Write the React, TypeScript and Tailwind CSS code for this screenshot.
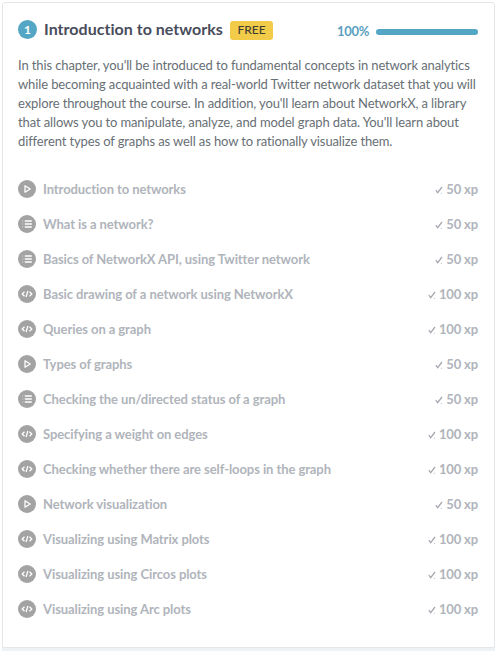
type Kind = "video" | "quiz" | "code";

interface Exercise {
  title: string;
  kind: Kind;
  xp: number;
}

const exercises: Exercise[] = [
  { title: "Introduction to networks", kind: "video", xp: 50 },
  { title: "What is a network?", kind: "quiz", xp: 50 },
  { title: "Basics of NetworkX API, using Twitter network", kind: "quiz", xp: 50 },
  { title: "Basic drawing of a network using NetworkX", kind: "code", xp: 100 },
  { title: "Queries on a graph", kind: "code", xp: 100 },
  { title: "Types of graphs", kind: "video", xp: 50 },
  { title: "Checking the un/directed status of a graph", kind: "quiz", xp: 50 },
  { title: "Specifying a weight on edges", kind: "code", xp: 100 },
  { title: "Checking whether there are self-loops in the graph", kind: "code", xp: 100 },
  { title: "Network visualization", kind: "video", xp: 50 },
  { title: "Visualizing using Matrix plots", kind: "code", xp: 100 },
  { title: "Visualizing using Circos plots", kind: "code", xp: 100 },
  { title: "Visualizing using Arc plots", kind: "code", xp: 100 },
];

function KindIcon({ kind }: { kind: Kind }) {
  return (
    <svg viewBox="0 0 18 18" className="size-[18px] shrink-0" fill="none" stroke="#fff">
      <circle cx="9" cy="9" r="9" fill="#a3a3a3" stroke="none" />
      {kind === "video" && <path d="M7 5.8v6.4L12.2 9z" strokeWidth="1.3" strokeLinejoin="round" />}
      {kind === "quiz" && (
        <>
          <path d="M4.2 6h1M4.2 9h1M4.2 12h1" strokeWidth="1" strokeOpacity=".6" />
          <path d="M6.8 6h7M6.8 9h7M6.8 12h7" strokeWidth="1.4" />
        </>
      )}
      {kind === "code" && (
        <path d="M6.5 6.7 4.2 9l2.3 2.3M11.5 6.7 13.8 9l-2.3 2.3M9.9 6 8.1 12" strokeWidth="1.3" />
      )}
    </svg>
  );
}

function Check() {
  return (
    <svg viewBox="0 0 8 8" className="mr-[3px] size-2" fill="none" stroke="#a5a9b0" strokeWidth="1.3">
      <path d="M.8 4.2 2.7 6.6 7 1" />
      <circle cx="6.3" cy="7.2" r=".5" fill="#a5a9b0" stroke="none" />
    </svg>
  );
}

export default function App() {
  return (
    <div className="h-[651px] w-[497px] bg-white font-['Lato',sans-serif] [font-variant-ligatures:none]">
      <div className="h-full pt-[2px] pl-[2px]">
        <section className="h-[646px] w-[493px] rounded-t-[3px] border border-[#e3e7ea] bg-white px-[15px] pt-[16px]">
          <header className="flex h-[22px] items-center">
            <span className="-mt-px flex size-[19px] items-center justify-center rounded-full bg-[#53a6c4] text-[12px] font-bold text-white">
              1
            </span>
            <h2 className="-mt-[2px] ml-[7px] w-[180px] text-[16px] leading-[22px] font-bold tracking-[0.03px] whitespace-nowrap text-[#484c5b]">
              Introduction to networks
            </h2>
            <span className="ml-[6px] flex h-[19px] w-[43px] items-center justify-center rounded-[3px] bg-[#f2cb49] text-[12px] font-medium text-[#3f3e35]">
              FREE
            </span>
            <span className="mt-[4px] ml-auto text-[13px] font-bold tracking-[-0.3px] text-[#5a9fc0]">100%</span>
            <span className="mt-[3px] mr-[1px] ml-[7px] h-[6px] w-[102px] rounded-full bg-[#53a6c4]" />
          </header>
          <p className="mt-[15px] text-[13px] leading-[19px] tracking-[-0.12px] whitespace-nowrap text-[#686f75]">
            In this chapter, you'll be introduced to fundamental concepts in network analytics
            <br />
            while becoming acquainted with a real-world Twitter network dataset that you will
            <br />
            explore throughout the course. In addition, you'll learn about NetworkX, a library
            <br />
            that allows you to manipulate, analyze, and model graph data. You'll learn about
            <br />
            different types of graphs as well as how to rationally visualize them.
          </p>
          <ul className="mt-[20px]">
            {exercises.map((e) => (
              <li
                key={e.title}
                className="flex h-[35px] items-center text-[13px] font-bold tracking-[-0.08px] text-[#b0b4bb]"
              >
                <KindIcon kind={e.kind} />
                <span className="ml-[7px] pt-[2px] whitespace-nowrap">{e.title}</span>
                <span className="ml-auto flex items-center pt-[2px] pr-[1px] tracking-[-0.15px] whitespace-nowrap">
                  <Check />
                  {e.xp} xp
                </span>
              </li>
            ))}
          </ul>
        </section>
        <div className="h-[3px] w-[493px] bg-[#edf2f5]" />
      </div>
    </div>
  );
}
